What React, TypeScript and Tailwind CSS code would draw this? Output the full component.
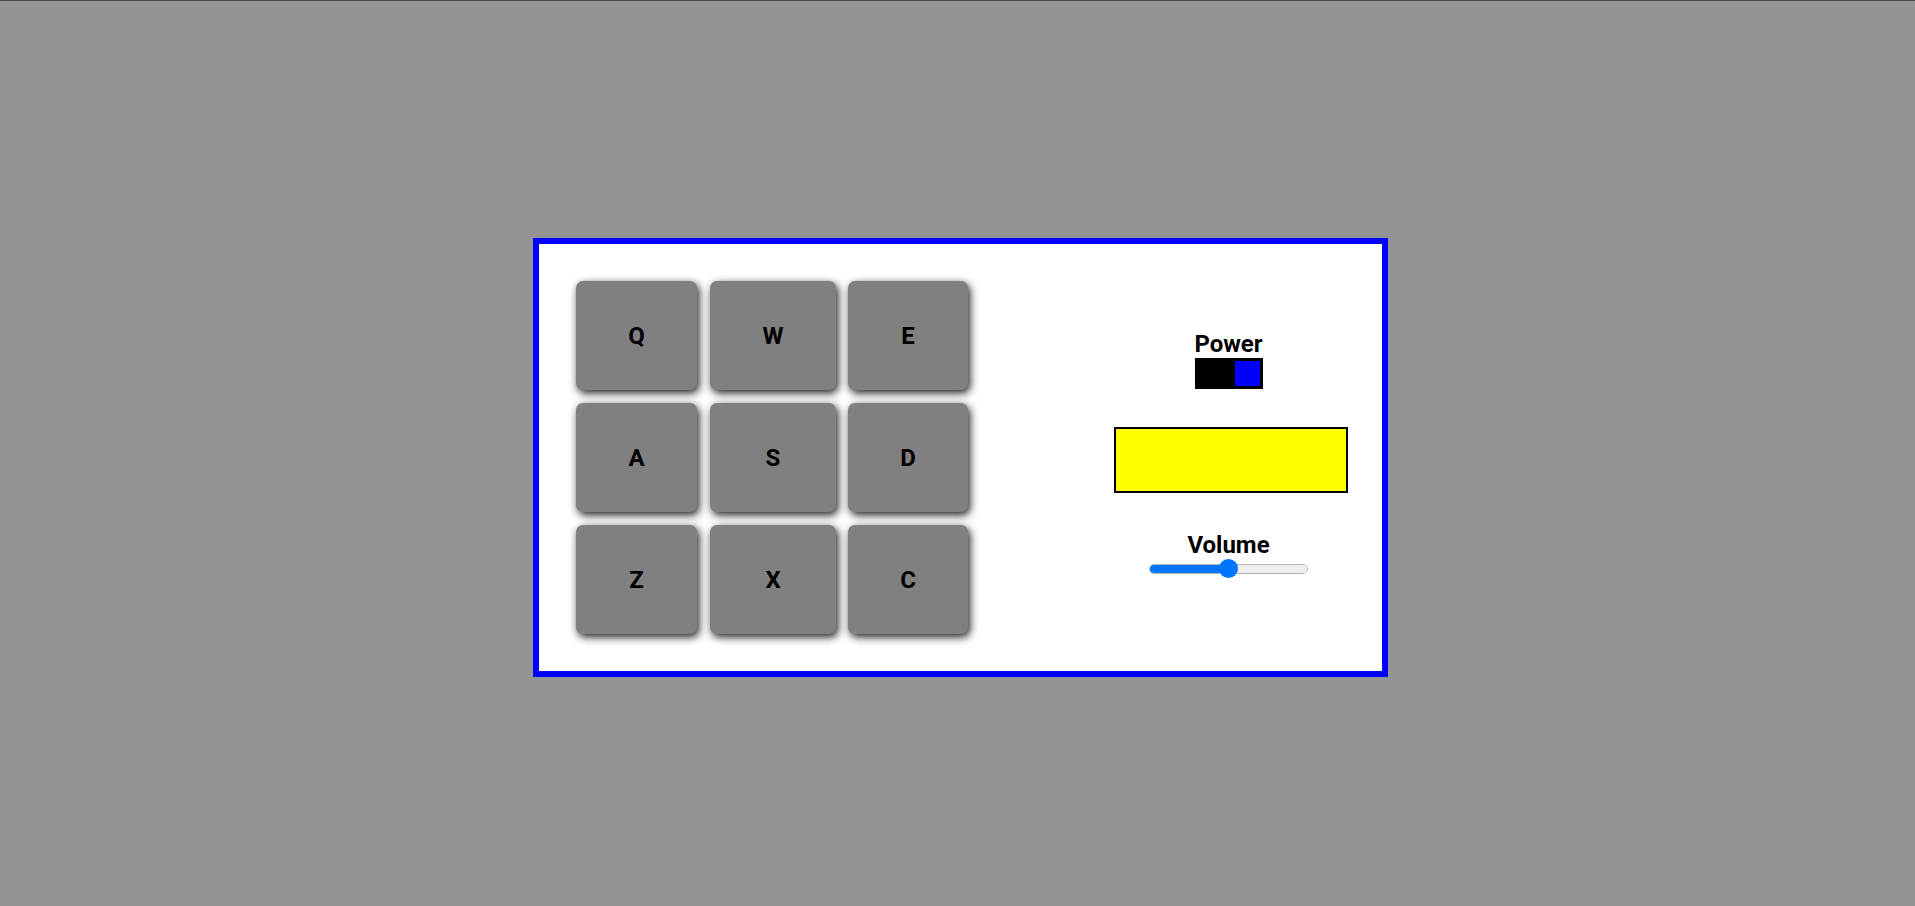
import React from 'react'

const rows = [
  ['Q', 'W', 'E'],
  ['A', 'S', 'D'],
  ['Z', 'X', 'C'],
]

const widths = ['w-[121px]', 'w-[126px]', 'w-[120px]']

function Pad({ label, width }: { label: string; width: string }) {
  return (
    <button
      className={`${width} h-[109px] rounded-[7px] bg-[#808080] text-[24px] font-bold leading-[28px] text-black shadow-[2px_3px_8px_rgba(0,0,0,0.9)]`}
    >
      {label}
    </button>
  )
}

export default function App() {
  return (
    <div
      className="min-h-screen border-t border-[#4a4a4a] bg-[#949494] pt-[237px]"
      style={{ fontFamily: 'Roboto, "Liberation Sans", sans-serif' }}
    >
      <div className="ml-[533px] flex h-[439px] w-[855px] border-[6px] border-[#0000ff] bg-white">
        {/* Drum pads */}
        <div className="flex flex-col gap-[13px] pl-[37px] pt-[37px]">
          {rows.map((row, r) => (
            <div key={r} className="flex gap-[12px]">
              {row.map((k, i) => (
                <Pad key={k} label={k} width={i === 0 ? 'mr-[1px] w-[121px]' : widths[i]} />
              ))}
            </div>
          ))}
        </div>

        {/* Controls */}
        <div className="ml-[146px] flex w-[234px] flex-col items-center pt-[86px]">
          <div className="mr-[5px] flex flex-col items-center">
            <span className="text-[24px] font-bold leading-[28px] text-black">Power</span>
            <div className="flex h-[31px] w-[68px] justify-end bg-black p-[3px]">
              <div className="h-[25px] w-[25px] bg-[#0000ff]" />
            </div>
          </div>

          <div className="mt-[38px] h-[66px] w-[234px] border-2 border-black bg-[#ffff00]" />

          <div className="mr-[5px] mt-[38px] flex flex-col items-center">
            <span className="text-[24px] font-bold leading-[28px] text-black">Volume</span>
            <div className="relative flex h-[20px] w-[159px] items-center">
              <div className="flex h-[10px] w-full overflow-hidden rounded-full border border-[#b5b5b5]">
                <div className="w-1/2 bg-[#0075ff]" />
                <div className="w-1/2 bg-[#efefef]" />
              </div>
              <div className="absolute left-[70px] top-[0px] h-[19px] w-[19px] rounded-full bg-[#0075ff]" />
            </div>
          </div>
        </div>
      </div>
    </div>
  )
}
